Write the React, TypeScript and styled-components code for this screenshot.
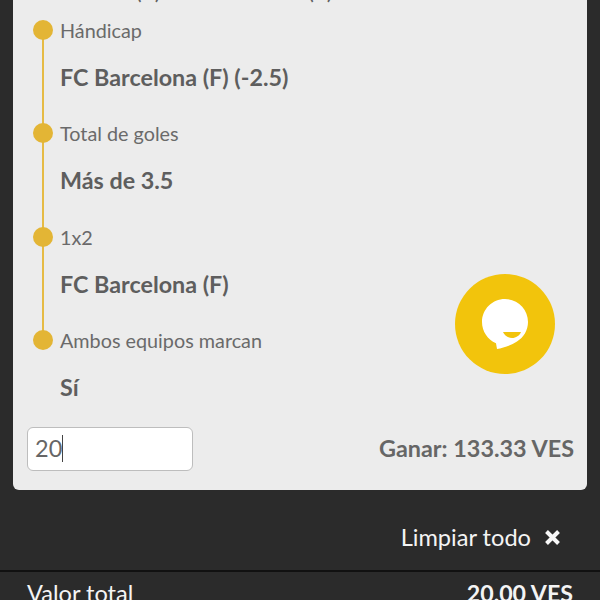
import React from "react";
import styled, { createGlobalStyle } from "styled-components";

const Global = createGlobalStyle`
  html, body { margin: 0; padding: 0; background: #2b2b2b; }
  body { width: 600px; height: 600px; overflow: hidden; font-family: Lato, "Open Sans", sans-serif; }
`;

const Page = styled.div`
  position: relative;
  width: 600px;
  height: 600px;
  overflow: hidden;
  background: #2b2b2b;
  display: flex;
  flex-direction: column;
`;

const Card = styled.section`
  box-sizing: border-box;
  height: 490px;
  margin: 0 13px;
  background: #ececec;
  border-radius: 0 0 6px 6px;
  padding: 0 13px 0 17px;
  position: relative;
  display: flex;
  flex-direction: column;
  flex: none;
`;

const TopLine = styled.div`
  height: 24px;
  margin-top: -22px;
  display: flex;
  justify-content: space-between;
  font-size: 23px;
  line-height: 24px;
  color: #5f5f5f;
  white-space: nowrap;
`;

const Legs = styled.div`
  display: flex;
  flex-direction: column;
  margin: 18px 0 0 -3px;
`;

const Leg = styled.div`
  position: relative;
  height: 103.3px;
  padding-left: 33px;
  box-sizing: border-box;
`;

const Rail = styled.span`
  position: absolute;
  left: 14.7px;
  top: 10px;
  width: 2px;
  height: 103px;
  background: #e6bb45;
`;

const Dot = styled.span`
  position: absolute;
  left: 5.5px;
  top: 0;
  width: 20px;
  height: 20px;
  border-radius: 50%;
  background: #e3b535;
`;

const Market = styled.div`
  font-size: 19.8px;
  line-height: 20px;
  color: #6a6a6a;
`;

const Pick = styled.div`
  margin-top: 23px;
  font-size: 23.3px;
  line-height: 28px;
  font-weight: 700;
  color: #5e5e5e;
  white-space: nowrap;
`;

const StakeRow = styled.div`
  position: absolute;
  left: 14px;
  right: 13px;
  top: 427px;
  display: flex;
  align-items: center;
  justify-content: space-between;
`;

const StakeBox = styled.div`
  box-sizing: border-box;
  width: 166px;
  height: 44px;
  background: #fff;
  border: 1.5px solid #bdbdbd;
  border-radius: 6px;
  padding: 0 0 2px 7px;
  display: flex;
  align-items: center;
  font-size: 23.5px;
  color: #666;
`;

const Caret = styled.span`
  width: 1px;
  height: 27px;
  background: #444;
`;

const Win = styled.div`
  font-size: 23.4px;
  font-weight: 700;
  color: #666;
  white-space: nowrap;
  padding-bottom: 2px;
`;

const ChatButton = styled.button`
  position: absolute;
  left: 455px;
  top: 274px;
  width: 100px;
  height: 100px;
  border: 0;
  padding: 0;
  border-radius: 50%;
  background: #f2c40c;
  display: flex;
  align-items: center;
  justify-content: center;
`;

const ClearRow = styled.div`
  height: 80px;
  box-sizing: border-box;
  flex: none;
  padding: 18px 40px 0 0;
  display: flex;
  justify-content: flex-end;
  align-items: flex-start;
  gap: 14px;
  color: #f4f4f4;
  font-size: 23.6px;
  line-height: 58px;
`;

const ClearIcon = styled.svg`
  width: 15px;
  height: 15px;
  margin-top: 22px;
`;

const TotalRow = styled.div`
  border-top: 2px solid #111;
  box-sizing: border-box;
  padding: 5px 27px 0;
  display: flex;
  justify-content: space-between;
  color: #f4f4f4;
  font-size: 23.6px;
  line-height: 32px;
  white-space: nowrap;
`;

const TotalValue = styled.span`
  font-weight: 700;
  font-size: 23.2px;
`;

const legs = [
  { market: "Hándicap", pick: "FC Barcelona (F) (-2.5)" },
  { market: "Total de goles", pick: "Más de 3.5" },
  { market: "1x2", pick: "FC Barcelona (F)" },
  { market: "Ambos equipos marcan", pick: "Sí" },
];

export default function App() {
  return (
    <>
      <Global />
      <Page>
        <Card>
          <TopLine>
            <span>Barcelona (F) - Real Madrid (F)</span>
            <span>6.67</span>
          </TopLine>
          <Legs>
            {legs.map((l, i) => (
              <Leg key={l.market}>
                {i < legs.length - 1 && <Rail />}
                <Dot />
                <Market>{l.market}</Market>
                <Pick>{l.pick}</Pick>
              </Leg>
            ))}
          </Legs>
          <StakeRow>
            <StakeBox>
              20
              <Caret />
            </StakeBox>
            <Win>Ganar: 133.33 VES</Win>
          </StakeRow>
        </Card>
        <ChatButton aria-label="Chat">
          <svg width="50" height="52" viewBox="0 0 50 52">
            <path
              d="M25 1C12.300 1 2 11.300 2 24c0 9.500 5.700 17.600 14 21.200L17 51c6-1 14-3.500 20-7.500C43.500 39.500 48 32.500 48 24 48 11.300 37.700 1 25 1z"
              fill="#fff"
            />
            <path d="M23 34h18c-1.500 3.500-5 6-9 6s-7.500-2.500-9-6z" fill="#f2c40c" />
          </svg>
        </ChatButton>
        <ClearRow>
          Limpiar todo
          <ClearIcon viewBox="0 0 15 15">
            <path d="M1.500 1.500l12 12M13.500 1.500l-12 12" stroke="#f8f8f8" strokeWidth="4" />
          </ClearIcon>
        </ClearRow>
        <TotalRow>
          <span>Valor total</span>
          <TotalValue>20.00 VES</TotalValue>
        </TotalRow>
      </Page>
    </>
  );
}
